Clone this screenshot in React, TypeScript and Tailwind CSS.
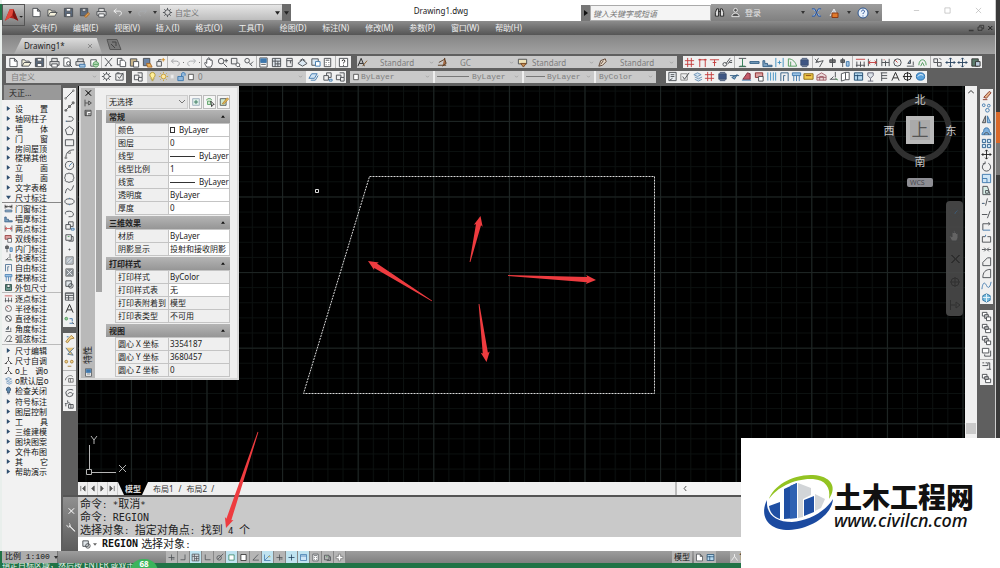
import type { ReactNode } from 'react';

type Shape = [d: string, stroke: string, fill?: string];

const K = '#4a4e52';
const B = '#3f78ad';
const R = '#c43c3c';
const G = '#4f9a5b';
const N = 'none';

// every glyph lives on a 12x12 board
const glyphs: Record<string, Shape[]> = {
  new: [['M2 1.5h5l3 3v6H2zM7 1.5v3h3', K, '#fff']],
  open: [['M1 10V3h3l1 1.5h4V6M1 10l2.5-4H11l-2.500 4z', K, '#f5f1dc']],
  save: [['M1.500 1.500h9v9h-9z', K, '#5b6b80'], ['M3.500 1.500h5v3h-5zM3.500 7h5v3.500h-5z', K, '#fff']],
  saveas: [['M1.500 1.500h8v8h-8z', K, '#5b6b80'], ['M3.500 2h4v2.500h-4z', K, '#fff'], ['M6 10l4-4 1.500 1.500-4 4z', '#a8682a', '#e0a050']],
  print: [['M3 5V1.500h6V5M1 5h10v4H1z', K, '#ddd'], ['M3 7.500h6V11H3z', K, '#fff']],
  preview: [['M2 1h5l2 2v7H2z', K, '#fff'], ['M9 7a2 2 0 1 1-4 0 2 2 0 0 1 4 0zM8.500 8.500L11 11', K]],
  plot: [['M3 5V2h6v3M1 5h9v4H1z', K, '#ddd'], ['M5 8h6v3H5z', B, '#a9c8e4']],
  publish: [['M3 3h6v7H3z', K, '#fff'], ['M8.500 5a3 3 0 1 0 .1 0zM6 8h5', G, '#b9dcb9']],
  cut: [['M2 1l7 8M10 1L3 9M2 9.500h2M8 9.500h2', K]],
  copy: [['M1.500 1.500h5v7h-5z', K, '#fff'], ['M4.500 3.500h4l2 2v5h-6z', K, '#fff']],
  paste: [['M1.500 2h7v8h-7z', K, '#c9b58a'], ['M5 5h5.500v6H5z', K, '#fff']],
  match: [['M1.500 1.500h7v8h-7z', K, '#6c84a4'], ['M5 7h4l2 4H6z', '#a8682a', '#e9b45c']],
  block: [['M2 5h5v5H2zM4 5V3h3', K], ['M9 1v4M7 3h4', '#d08a20']],
  undo: [['M4 2L1.500 4.500 4 7M2 4.500h5c4 0 4 5 1 5', '#9a9da0']],
  redo: [['M8 2l2.500 2.500L8 7M10 4.500H5c-4 0-4 5-1 5', '#a9acaf']],
  undoW: [['M5 2L2 4.500 5 7M2.500 4.500H8c3 0 3 4 0 5', '#f4f4f4']],
  pan: [['M3 11C1 8 0 6 1.500 6L3 7V3c0-1 1.500-1 1.500 0V1.500C4.500.5 6 .5 6 1.500V3c0-1 1.500-1 1.500 0v1C7.500 3 9 3 9 4v4l-1.500 3z', K, '#fff']],
  zoom: [['M7.500 4.500a3 3 0 1 1-6 0 3 3 0 0 1 6 0zM7 7l4 4M10 2v4M8 4h4', K]],
  zoomwin: [['M1.500 1.500h6v6h-6z', K], ['M8.500 6.500a2 2 0 1 0 .1 0zM10 10l1.500 1.500', K, '#fff']],
  zoomprev: [['M7 4a2.500 2.500 0 1 1-5 0 2.500 2.500 0 0 1 5 0zM6.500 6L10 10M11 5L8 8', K]],
  props: [['M2 1h8v10H2z', K, '#fff'], ['M3 2h6v4H3z', B, B], ['M3.500 8h5', K]],
  grid: [['M1.500 1.500h9v9h-9zM1.500 4.500h9M4.500 1.500v9M7.500 4.500v6M4.500 7.500h6', K, '#dde4ea']],
  palette: [['M3 1.500h6v9H3zM3 4h6M7 4v3', K, '#eee']],
  sheet: [['M1 7l5-4 5 4-5 3zM3 4l3-2 3 2', K, '#dce8f2']],
  markup: [['M2 2h7v7H2z', K, '#dce8f2'], ['M6 5h5v5H6z', B, '#fff']],
  calc: [['M2.500 1.500h7v9h-7zM4 3.500h4M4 6h1M7 6h1M4 8.500h1M7 8.500h1', K, '#fff']],
  help: [['M1.500 1.500h9v9h-9z', K, '#fff'], ['M4.500 4.500c0-2 3-2 3 0 0 1-1.500 1-1.500 2.500M6 8.500v1', '#111']],
  gear: [['M9 6a3 3 0 1 1-6 0 3 3 0 0 1 6 0z', K], ['M6 1v2M6 9v2M1 6h2M9 6h2M2.500 2.500L4 4M8 8l1.500 1.500M9.500 2.500L8 4M4 8L2.500 9.500', K]],
  wsave: [['M2 3h8v7H2zM4 6l2 2 4-6M3 2h3', K]],
  layers: [['M1.500 4.500h5v5h-5zM5 2h5v5', K], ['M6 7h4v4H6z', K, '#eee']],
  layersB: [['M1 8l3-5h6l-3 5z', B, '#cfe3f4'], ['M3 10h5l3-5', B]],
  bulb: [['M6 1.500a3 3 0 0 1 1.500 5.500v2h-3V7A3 3 0 0 1 6 1.500zM5 10.500h2', '#b59a34', '#ffef9a']],
  bulbB: [['M6 1.500a3 3 0 0 1 1.500 5.500v2h-3V7A3 3 0 0 1 6 1.500zM5 10.500h2', '#2b4560', '#5b87ad']],
  sun: [['M8.500 6a2.500 2.500 0 1 1-5 0 2.500 2.500 0 0 1 5 0zM6 1v1.500M6 9.500V11M1 6h1.500M9.500 6H11M2.500 2.500l1 1M8.500 8.500l1 1M9.500 2.500l-1 1M2.500 9.500l1-1', '#c8a03c', '#ffe9a0']],
  sheetY: [['M3 3h5v6H3z', '#d8d8d8', '#eee']],
  lock: [['M2 6h6v4.500H2zM6 6V3.500c0-2.500 4-2.500 4 0V5', B, '#8fb7dc']],
  box: [['M2.500 2h7v8h-7z', '#222', '#fff']],
  styleA: [['M1 10L4.500 1.500 8 10M2.500 7h4', '#222'], ['M6 10l5-6', '#8a5a28']],
  dim: [['M1 9h9M2 6l7-4M8 1l2 6-4 3', '#5a3b22', '#a46a44']],
  tbl: [['M1.500 2.500h9v5h-9z', K, '#efe2b8'], ['M4 7l3 4 3-4z', '#7a4a22', '#c58b50']],
  leader: [['M2 10l2-6 5-2 1 3-4 4zM4 8l3-4', '#5a4030', '#e8dccb']],
  hashR: [['M4 1v10M8 1v10M1 4h10M1 8h10', R]],
  pillR: [['M2 3h8M3 2v9M9 2v9M1.500 3h3M7.500 3h3', R]],
  pipeR: [['M1 3h10M6 3v7M4 6h4', R]],
  scis: [['M5 8a2 2 0 1 1-4 0 2 2 0 0 1 4 0zM4.500 7L9 1M6 8l3-4h2M8 6h3', K]],
  beam: [['M2 1.500h8M2 10.500h8', K], ['M6 2v8M3 10h6', '#2a7a50', '#2a7a50']],
  wall: [['M1 5h10v2H1z', '#2f5d82', '#7ba1c0']],
  stair: [['M1 9V4h2v3h3v2h5v1.500H1z', '#355f86', '#7ba1c0']],
  door: [['M2 1v10M10 1v10M4 6h4M6 4v4', '#3f8fc0']],
  arcG: [['M1.500 10V2c5 0 8 4 9 8zM4 10V5', G]],
  solid: [['M2 3h8v6H2z', '#3b4e70', '#3f5684'], ['M3 1.500h6M3 10.500h6', '#3b4e70']],
  brush: [['M1 2l4 4M5 1L2 6l8-2-4 7', K]],
  pin: [['M6 1v10M3 3h6v3H3z', K, '#777']],
  pinB: [['M4 1v10M2 3h4v3H2z', K, '#777'], ['M8 5h3v5H8z', B, '#a9c8e4']],
  dimR: [['M2 5v6M6 5v6M10 5v6M1 9h10', K], ['M1 2.500h10', R]],
  dimRR: [['M1.500 2v8M10.500 2v8', K], ['M1.500 6h9M3.500 4L2 6l1.500 2M8.500 4L10 6 8.500 8', R]],
  dimBK: [['M1.500 8h9v2.500h-9z', '#4b6a88', '#8fb0cc'], ['M1.500 1v5M10.500 1v5M1.500 3.500h9M4 2L2.500 3.500 4 5M8 2l1.500 1.500L8 5', '#222']],
  dimK: [['M2 2v8M10 2v8M6 4v6M2 6h8', K], ['M4 3h1', R]],
  circ: [['M10 6a4 4 0 1 1-8 0 4 4 0 0 1 8 0z', K], ['M3.500 3.500L6 6', R]],
  diam: [['M10 6a4 4 0 1 1-8 0 4 4 0 0 1 8 0zM3 3l6 6', K], ['M3 5V3h2M9 7v2H7', K]],
  tri: [['M2 10h8M3 7l3-4v4zM9 5v4', K, '#7ea0c0']],
  arcs: [['M2 9c0-8 8-8 8 0M4 10l2-4 2 4', G]],
  chord: [['M1 10L5 3M5 3c3-2 5 0 5 2M3 10h8M7 10l3-6', K]],
  chain: [['M2 2h4v4H2zM6 6h4v4H6zM8 1l2 2', K]],
  move: [['M6 1v10M1 6h10M4.500 2.500L6 1l1.500 1.500M4.500 9.500L6 11l1.500-1.500M2.500 4.500L1 6l1.500 1.500M9.500 4.500L11 6 9.500 7.500', '#27435f']],
  clip: [['M2 2h7v8H2z', '#333', '#5a7a6a'], ['M6 5h5v5H6z', '#333', '#bcd']],
  list: [['M2 1.500h8v9H2zM4 4h4M4 6h4M3 10l3-2', K, '#e5eaee']],
  check: [['M2 3h7v7H2z', '#888', '#eee'], ['M4 6l2 3 5-7', K]],
  cyl: [['M2 4l4-2 4 2-4 2zM3 6.500l4 2 4-2M3 9l4 2 4-2', '#6f93b5', '#cfe0ef']],
  flag: [['M1 5h10M3 7l3 2 3-5z', '#355f86', '#7ba1c0']],
  redB: [['M2 9l5-7 3 1v6z', '#7c2c3c', '#c45a6a'], ['M1 10h10', B]],
  redS: [['M1.500 2h8v5h-8z', '#8c2c2c', '#dba0a0'], ['M5 6h5v5H5z', K, '#fff']],
  cols: [['M2 1.500v9M5 1.500v9M8 1.500v9M10.500 1.500v9', '#3f8fc0']],
  gate: [['M2 11V2h8v9M5 11V5h2', '#355f86']],
  gateB: [['M1.500 2h9v3h-9z', B, '#9cc4e6'], ['M3 5v6M6 5v6M9 5v6', B]],
  yel: [['M1 3h10v6H1z', '#8a6a10', '#f0c84c'], ['M3 5h6', '#8a4a10']],
  house: [['M1 10V5l5-3 5 3v5zM4 10V6h4v4M1 7h10', '#a0606a', '#ead8d8']],
  run: [['M2 9h8M3 9l3-3M8 1v6', K], ['M8 8l3 2', G]],
  node: [['M6 2v4M2 10l4-4 4 4M1 10h3M8 10h3M5 2h2', '#333']],
  book: [['M1.500 3L6 1.500v8L1.500 11zM6 1.500h4v8H6', K, '#fff']],
  win: [['M1.500 2h9v8h-9zM5 4v6M1.500 5h9', '#234d70', '#b5d8ee']],
  tub: [['M2 2h8v8H2zM4 2v4h4V2', '#1d3d38', '#6f9c92']],
  cup: [['M3 2h6v3l-3 3-3-3zM6 8v3M3 11h6', '#667', '#dde4ea']],
  flow: [['M3 2h7M4 5h6M4 8h6M4 2v9', K]],
  bigA: [['M2 10.500L6 1.500l4 9M3.500 7.500h5', '#222']],
  target: [['M10 6a4 4 0 1 1-8 0 4 4 0 0 1 8 0zM6 1v10M1 6h10', '#222']],
  globe: [['M10.500 6a4.500 4 0 1 1-9 0 4.500 4 0 0 1 9 0z', '#2b6ca8', '#5ba3dc'], ['M3 6c2-3 5-2 6-1', '#fff']],
  line: [['M2 10l8-8', K], ['M1 9.500h1.500V11H1zM9.500 1H11v1.500H9.500z', '#888']],
  xline: [['M2 10l8-8', K], ['M1 9.500h2V11H1zM9 1h2v2H9zM5 5h2v2H5z', '#666', '#888']],
  pline: [['M2 9h5c4 0 4-5 0-5H5', K], ['M2 9h1', B]],
  poly: [['M6 1.500l4.500 3.500-1.700 5.500H3.200L1.500 5z', K]],
  rect: [['M1.500 3h9v6.500h-9z', K]],
  arc: [['M2 11C2 5 5 2 11 2', K], ['M1 10h2v1.500H1zM5 4h2v2H5z', '#888']],
  circle: [['M10.500 6a4.500 4.500 0 1 1-9 0 4.500 4.500 0 0 1 9 0z', K], ['M6 6l2.500-2.500M5.500 6.500h1', B]],
  cloud: [['M3.500 2c1-1 3-1 4 0 2-.5 3 1 2.500 2.500 1 1 1 2.500 0 3.500.5 2-1 3-2.500 2.500-1 1-3 1-4 0C2 11 .8 9.500 1.500 8c-1-1-1-2.500 0-3.500C1 3 2 1.500 3.500 2z', K]],
  spline: [['M1.500 10c1-5 2-6 4-4s3 1 5-4.500', K]],
  ellipse: [['M11 6a5 3 0 1 1-10 0 5 3 0 0 1 10 0z', K], ['M5.500 2.500h1M5.500 9.500h1', B]],
  earc: [['M5 9.500h2c5 0 4-6-1-6S1 5.500 2 7', K]],
  insert: [['M2 5h5v5H2zM5 5V2h5v5H7', K], ['M8 9h3v2H8z', B]],
  mkblock: [['M2 3h6v6H2zM8 5h2v5H5', K], ['M4 5h2', G]],
  point: [['M5.500 5.500h1v1h-1z', K]],
  hatch: [['M2 2h8v8H2z', '#777', '#cfd4d8'], ['M2 6l4-4M2 10l8-8M6 10l4-4', '#9aa6b2']],
  grad: [['M2 2h8v8H2z', '#777', '#8b9299'], ['M3 3l6 6M9 3L3 9', '#eee']],
  region: [['M2 2h6v6H2z', K, '#e0e6ea'], ['M10 7.500a2.500 2.500 0 1 1-5 0 2.500 2.500 0 0 1 5 0z', K]],
  table: [['M1.500 2h9v8h-9zM1.500 5h9M1.500 7.500h9M5 5v5', K, '#fff'], ['M2 3h8', K]],
  dots: [['M4 4a1.500 1.500 0 1 1-3 0 1.500 1.500 0 0 1 3 0z', G, '#9c9'], ['M6 4h3v3M6 9h4', B], ['M9 8l2 2', K]],
  key: [['M8 1.500l3 3-4 1-3 4-2-1 3-4z', '#a9803a', '#f3d690'], ['M3 3h2', B]],
  keyB: [['M2 2l4 5 5-5M4 9l3-3 3 4z', '#5a7896', '#e8c478']],
  keyC: [['M4 4a1.500 1.500 0 1 1-3 0 1.500 1.500 0 0 1 3 0zM10 4a1.500 1.500 0 1 1-3 0 1.500 1.500 0 0 1 3 0zM4 9h4', '#a9803a', '#f3d690']],
  cloudq: [['M1.500 8c0-4 6-7 8-4M5 6h5v4H5zM7 6v4', '#777']],
  wheel: [['M10 6.500a4 4 0 1 1-8 0c0-3 5-5 8-3M4 8c2-3 4-2 5-1', K]],
  sunb: [['M2 8a3 3 0 0 1 5-3M4 1.500v2M1 5h1.500M5 6h5v4H5zM7.500 6v4', K]],
  eraser: [['M2 10.500h5M3 8l6-6.500 2 1.500-5 6z', '#8a3b2c', '#e5b58a']],
  copy2: [['M4.500 3.500a1.500 1.500 0 1 1-3 0 1.500 1.500 0 0 1 3 0zM10 4a1.500 1.500 0 1 1-3 0 1.500 1.500 0 0 1 3 0zM9 9a2 2 0 1 1-4 0 2 2 0 0 1 4 0z', B]],
  mirror: [['M5 2L1.500 9.500H5z', K, '#bbb'], ['M7 2l3.500 7.500H7z', B, '#9cc4e6']],
  offset: [['M1 9.500c0-3 2-3 2-4s0-3.500 3-3.500 3 2.500 3 3.500 2 1 2 4z', B, '#7fb0dc'], ['M3.500 9.500c0-3 5-3 5 0', K]],
  array: [['M1.500 1.500h3.500v3.500H1.500zM7 1.500h3.500v3.500H7zM1.500 7h3.500v3.500H1.500zM7 7h3.500v3.500H7z', '#2c5f8e', '#cfe6f6']],
  arrow4: [['M6 1v10M1 6h10M4.500 2.500L6 1l1.500 1.500M4.500 9.500L6 11l1.500-1.500M2.500 4.500L1 6l1.500 1.500M9.500 4.500L11 6 9.500 7.500', '#222']],
  rotate: [['M4 2.500a4.500 4.500 0 1 0 4 0M4.500 .5v2.500H2', K]],
  scale: [['M1.500 1.500h9v9h-9z', B, '#cfe6f6'], ['M1.500 6h5v4.500', B]],
  stretch: [['M2 1.500h5l3 9H2z', K, '#d8efe8'], ['M5 6h3v3H5z', K]],
  trim: [['M1 7h3M8 5h3M5 9.500l2-8', K], ['M2 7h1', B]],
  extend: [['M1 6h6M7 10l3-8', K]],
  brk: [['M2 10V3h7M8 1.500L10 3 8 4.500', K], ['M2 10h8', B]],
  brk2: [['M1.500 10V4h3M7 4h3.500v6h-9', K], ['M5 2v2', B]],
  join: [['M1 6h4M7 6h4M3.500 4l2 2-2 2M8.500 4l-2 2 2 2', K]],
  chamfer: [['M2 10.500V7l5-5h3.500v8.500z', K, '#eee']],
  fillet: [['M2 10.500c0-6 3-9 8.500-9v9z', K, '#eee']],
  blend: [['M1 10c1-8 3-8 5-4s4 2 5-4', B]],
  explode: [['M2 4l4-2 4 2v5l-4 2-4-2z', '#2c6f9e', '#7cbfe0'], ['M6 2v9M2 6h8', '#e8f4fb']],
  order: [['M1.500 1.500h5v4h-5z', K, '#fff'], ['M4 4h4v4H4z', K, '#ccc'], ['M6 6.500h4.500v4H6z', K, '#fff']],
  order2: [['M1.500 1.500h5v4h-5zM5 6.500h5.500v4H5z', K, '#fff'], ['M4 4h4v3H4z', K, '#bbb']],
  order3: [['M1.500 1.500h7v5h-7z', K, '#fff'], ['M10.500 4v6H4V8', K]],
  order4: [['M1.500 2h2M5 2h2M1.500 5h6V2h2v7M6 9h5', K]],
  bino: [['M1.500 10V6L3 2h2v8zM7 10V2h2l1.500 4v4zM5 5h2', '#222', '#ddd']],
  user: [['M8 3.500a2 2 0 1 1-4 0 2 2 0 0 1 4 0zM2 10.500c0-5 8-5 8 0z', '#eee', '#555']],
  exch: [['M1 2h3l4 8h3M11 2H8L4 10H1', '#244f9a', '#8fb7e8']],
  lockO: [['M2 9l4-7 2 4', '#e8e8e8', '#b8c6d8'], ['M4 6h6v4.500H4z', '#8c3a12', '#e07a2c']],
  qmark: [['M11 6A5 5 0 1 1 1 6a5 5 0 0 1 10 0z', '#2c5590', '#e9f1fa'], ['M4.500 4.500c0-2 3-2 3 0 0 1-1.500 1-1.500 2.500M6 8.500v1', '#244f9a']],
  cross: [['M2 2l8 8M10 2l-8 8', '#555']],
  crossK: [['M2 2l8 8M10 2l-8 8M3 2l8 8M11 2l-8 8', '#111']],
  crossW: [['M2 2l8 8M10 2l-8 8M3 2l8 8M11 2l-8 8', '#f2f2f2']],
  crossL: [['M1.500 1.500l9 9M10.500 1.500l-9 9', '#aaa']],
  wrench: [['M4 4l7 7M3.500 4.500l7 7M1 3.500c0 4 5 3 4 0L4 1.500', '#f2f2f2']],
  minus: [['M1.500 6h9', '#aaa']],
  minusK: [['M1.500 9h8M1.500 10h8', '#222']],
  maxi: [['M1.500 1.500h9v9h-9z', '#aaa']],
  restore: [['M1.500 4.500h6v5h-6zM4 4V2h6v5H8', '#222']],
  hide: [['M1.500 1v10M2 6h4M7 3l4 3-4 3M7 3v6', '#222']],
  menu: [['M1.500 2h9v8h-9z', '#222', '#fff'], ['M2 3.500h8M4 4v6M2.500 4v6M6 7h4M6 9h4', '#222']],
  plusC: [['M2 2h8v8H2z', '#9ab', '#dff0ea'], ['M6 3.500v5M3.500 6h5', '#2a6f50']],
  select: [['M2 4c0-3 6-3 6 0M3 5h4v4H3z', G, '#cfe8cf'], ['M7 5l4 4-2 .5-1 2z', '#222', '#fff']],
  pencil: [['M1.500 2h7v8h-7z', K, '#cfe8cf'], ['M4 8l6-7 1.500 1.500-6 6z', '#b07a20', '#f2c860']],
  snap: [['M6 2v8M2 6h8M7 8h3', K]],
  ortho: [['M8 2v7H2', K]],
  orthoL: [['M3 2v7h7', K]],
  polar: [['M8.500 6.500a3 3 0 1 1-6 0 3 3 0 0 1 6 0zM4 8l7-7', K]],
  square: [['M2.500 2.500h7v7h-7z', '#2f7f5f', '#fff']],
  angle: [['M9.500 2L2.500 9.500h8', K]],
  ucs: [['M2 2v8h8M2 10l7-7', B], ['M7 5h3', '#c9a030']],
  plusK: [['M6 2v8M2 6h8', '#1b3a56']],
  plusW: [['M4.500 1.500h3v3h3v3h-3v3h-3v-3h-3v-3h3z', '#777', '#fff']],
  sheetB: [['M2 2h8v8H2z', B, '#cfe6f6'], ['M2 4h8', B]],
  person: [['M6 1.500v3M6 4.500L2 10M6 4.500l4 5.500', '#fff']],
};

function Glyph({ name, className = 'w-[11px] h-[11px]' }: { name: string; className?: string }) {
  return (
    <svg viewBox="0 0 12 12" className={`shrink-0 ${className}`} aria-hidden="true">
      {glyphs[name].map(([d, stroke, fill], i) => (
        <path key={i} d={d} stroke={stroke} fill={fill ?? N} strokeWidth="1" />
      ))}
    </svg>
  );
}

// '|' in a list is a separator, '.' a tiny drop-down arrow
function Tools({ names, vertical = false }: { names: string; vertical?: boolean }) {
  return (
    <>
      {names.split(' ').map((name, i) => {
        if (name === '|') return <span key={i} className={vertical ? 'w-full h-px bg-[#b5b5b5]' : 'w-px h-full bg-[#b5b5b5]'} />;
        if (name === '.') return <span key={i} className="w-px h-px bg-[#777]" />;
        return (
          <button key={i} type="button" aria-label={name} className="flex shrink-0 items-center justify-center">
            <Glyph name={name} />
          </button>
        );
      })}
    </>
  );
}

function Pick({ label, value, className, children }: { label: string; value: string; className: string; children?: ReactNode }) {
  return (
    <label className={`relative flex items-center bg-[#c9c9c9] text-[#7d7d7d] text-[8px] ${className}`}>
      {children}
      <select aria-label={label} className="min-w-0 flex-1 h-full appearance-none bg-transparent leading-[11px] outline-none">
        <option>{value}</option>
      </select>
      <svg viewBox="0 0 6 4" className="w-[5px] h-[3px] mr-[3px] shrink-0" aria-hidden="true">
        <path d="M1 1l2 2 2-2" stroke="#999" fill="none" />
      </svg>
    </label>
  );
}

function Down({ color = '#222' }: { color?: string }) {
  return (
    <svg viewBox="0 0 6 4" className="w-[5px] h-[4px] shrink-0" aria-hidden="true">
      <path d="M0 0h6L3 4z" fill={color} />
    </svg>
  );
}

function Dot() {
  return (
    <svg viewBox="0 0 4 3" className="h-[3px] w-[4px] shrink-0" aria-hidden="true">
      <path d="M0 0h4L2 3z" fill="#333" />
    </svg>
  );
}

function TitleBar() {
  return (
    <header className="flex h-[21px] items-end bg-white">
      <div className="flex h-[17px] w-[289px] items-center bg-linear-to-b from-[#b8b8b8] to-[#8d8d8d] pl-[29px]">
        <div className="flex w-[126px] items-center justify-between">
          {['new', 'open', 'save', 'saveas', 'print', 'undoW'].map(n => (
            <button key={n} type="button" aria-label={n}><Glyph name={n} /></button>
          ))}
          <Dot />
          <button type="button" aria-label="redo"><Glyph name="redo" /></button>
          <Dot />
        </div>
        <label className="ml-[3px] flex h-[15px] w-[122px] items-center gap-[2px] bg-linear-to-b from-[#e6e6e6] to-[#bdbdbd] px-[2px] text-[#777]">
          <Glyph name="gear" />
          <select aria-label="工作空间" className="flex-1 appearance-none bg-transparent text-[8px] leading-[12px]">
            <option>自定义</option>
          </select>
          <Down />
        </label>
        <button type="button" aria-label="更多" className="flex h-full w-[9px] items-center justify-center bg-[#6c6c6c]"><Down /></button>
      </div>
      <h1 className="flex-1 pl-[10px] text-center text-[8px] leading-[20px] text-[#222]">Drawing1.dwg</h1>
      <button type="button" aria-label="展开" className="flex h-[16px] w-[9px] items-center justify-center bg-[#777]">
        <svg viewBox="0 0 4 6" className="h-[6px] w-[4px]"><path d="M0 0l4 3-4 3z" fill="#111" /></svg>
      </button>
      <input
        aria-label="搜索"
        placeholder="键入关键字或短语"
        className="h-[16px] w-[121px] border border-[#aaa] bg-[#f4f4f4] px-[2px] text-[8px] italic leading-[14px] placeholder:text-[#777]"
      />
      <div className="flex h-[17px] w-[171px] items-center bg-linear-to-b from-[#9d9d9d] to-[#808080] px-[3px]">
        <Glyph name="bino" />
        <Glyph name="user" className="ml-[5px] h-[11px] w-[11px]" />
        <button type="button" className="ml-[4px] text-[8px] leading-[12px] text-[#e6e6e6]">登录</button>
        <div className="ml-auto flex w-[78px] items-center justify-between">
          <Dot />
          <Glyph name="exch" />
          <Glyph name="lockO" className="h-[12px] w-[12px]" />
          <Dot />
          <Glyph name="qmark" className="h-[12px] w-[12px]" />
          <Dot />
        </div>
      </div>
      <div className="flex h-[21px] w-[113px] items-center justify-end gap-[24px] pr-[13px]">
        <button type="button" aria-label="最小化"><Glyph name="minus" className="h-[7px] w-[7px]" /></button>
        <button type="button" aria-label="最大化"><Glyph name="maxi" className="h-[7px] w-[7px]" /></button>
        <button type="button" aria-label="关闭"><Glyph name="crossL" className="h-[7px] w-[7px]" /></button>
      </div>
    </header>
  );
}

const menus = ['文件(F)', '编辑(E)', '视图(V)', '插入(I)', '格式(O)', '工具(T)', '绘图(D)', '标注(N)', '修改(M)', '参数(P)', '窗口(W)', '帮助(H)'];

function MenuBar() {
  return (
    <nav className="flex h-[14px] items-center bg-linear-to-b from-[#8c8c8c] to-[#555] pl-[30px]">
      <ul className="flex gap-[16px] text-[8px] leading-[14px] text-[#efefef]">
        {menus.map(m => (
          <li key={m}><button type="button">{m}</button></li>
        ))}
      </ul>
      <div className="ml-auto flex items-center gap-[2px] pr-[2px]">
        <Glyph name="minusK" className="h-[7px] w-[7px]" />
        <Glyph name="restore" className="h-[8px] w-[8px]" />
        <Glyph name="crossK" className="h-[6px] w-[6px]" />
      </div>
    </nav>
  );
}

function Toolbars() {
  return (
    <div className="bg-[#606060]">
      <div className="flex h-[19px] items-end bg-linear-to-b from-[#858585] to-[#a2a2a2] pl-[12px]">
        <button type="button" className="flex h-[16px] w-[88px] items-center justify-between bg-linear-to-b from-[#dcdcdc] to-[#a9a9a9] pr-[9px] pl-[10px] text-[8px] text-[#222] [clip-path:polygon(9%_0,94%_0,100%_100%,0_100%)]">
          Drawing1*
          <Glyph name="cross" className="h-[6px] w-[6px]" />
        </button>
        <button type="button" aria-label="新图形" className="mb-[4px] ml-[4px]">
          <svg viewBox="0 0 16 11" className="h-[11px] w-[16px]">
            <path d="M1 .5h10l4 10H4z" fill="#777" stroke="#555" />
            <path d="M6 3h4v4M5 5l4 4" stroke="#444" fill="none" />
          </svg>
        </button>
      </div>

      <div className="flex h-[16px] items-center pl-[4px]">
        <div className="flex h-[12px] w-[345px] items-center justify-between bg-[#f0f0f0] px-[2px]">
          <Tools names="new open save | print preview plot publish | cut copy paste match block | undo . redo . | pan zoom zoomwin zoomprev | props grid palette sheet markup calc | help" />
        </div>
        <div className="ml-[6px] flex h-[12px] w-[320px] bg-[#f0f0f0]">
          <Pick label="文字样式" value="Standard" className="flex-1 gap-[12px]"><Glyph name="styleA" /></Pick>
          <Pick label="标注样式" value="GC" className="flex-1 gap-[12px]"><Glyph name="dim" /></Pick>
          <Pick label="表格样式" value="Standard" className="flex-1 gap-[4px]"><Glyph name="tbl" /></Pick>
          <Pick label="引线样式" value="Standard" className="flex-1 gap-[12px]"><Glyph name="leader" /></Pick>
        </div>
        <div className="ml-[6px] flex h-[12px] w-[299px] items-center justify-between bg-[#f0f0f0] px-[1px]">
          <Tools names="hashR pillR pipeR scis | beam wall stair door arcG solid | brush pin pinB | dimR dimRR dimK circ tri arcs | chain move move clip" />
        </div>
      </div>

      <div className="flex h-[15px] items-center pb-[2px] pl-[4px]">
        <Pick label="工作空间" value="自定义" className="h-[12px] w-[94px] pl-[5px]" />
        <div className="flex h-[12px] w-[26px] items-center justify-around bg-[#f0f0f0]"><Tools names="gear wsave" /></div>
        <div className="ml-[6px] flex h-[12px] w-[214px] items-center bg-[#f0f0f0] pl-[1px]">
          <Tools names="layers" />
          <Pick label="图层" value="0" className="ml-[3px] h-full flex-1">
            <Glyph name="bulb" />
            <Glyph name="sun" />
            <Glyph name="sheetY" className="h-[9px] w-[7px]" />
            <Glyph name="lock" />
            <Glyph name="box" className="mr-[3px] h-[8px] w-[8px]" />
          </Pick>
          <div className="flex w-[40px] justify-between pl-[2px]"><Tools names="layersB insert layers" /></div>
        </div>
        <div className="ml-[4px] flex h-[12px] w-[306px] gap-[2px] bg-[#eee]">
          <Pick label="颜色" value="ByLayer" className="w-[83px] pl-[2px] font-['Liberation_Mono']">
            <Glyph name="box" className="mr-[1px] h-[8px] w-[8px]" />
          </Pick>
          <Pick label="线型" value="ByLayer" className="w-[87px] pl-[2px] font-['Liberation_Mono']">
            <span className="mr-[3px] h-px w-[32px] bg-[#777]" />
          </Pick>
          <Pick label="线宽" value="ByLayer" className="w-[70px] pl-[2px] font-['Liberation_Mono']">
            <span className="mr-[2px] h-px w-[19px] bg-[#777]" />
          </Pick>
          <Pick label="打印样式" value="ByColor" className="flex-1 pl-[3px] font-['Liberation_Mono']" />
        </div>
        <div className="ml-[10px] flex h-[12px] w-[261px] items-center justify-between bg-[#f0f0f0] px-[1px]">
          <Tools names="list check cyl hashR solid flag redB redS cols gate gateB yel house run book win cup flow bigA target globe" />
        </div>
      </div>
    </div>
  );
}

const treeTop = ['设 置', '轴网柱子', '墙 体', '门 窗', '房间屋顶', '楼梯其他', '立 面', '剖 面', '文字表格', '尺寸标注'];
const treeDims = [
  ['dimBK', '门窗标注'], ['stair', '墙厚标注'], ['dimRR', '两点标注'], ['redS', '双线标注'], ['pinB', '内门标注'],
  ['run', '快速标注'], ['gate', '自由标注'], ['gateB', '楼梯标注'], ['tub', '外包尺寸'],
];
const treePoints = [['dimR', '逐点标注'], ['circ', '半径标注'], ['diam', '直径标注'], ['tri', '角度标注'], ['chord', '弧弦标注']];
const treeEdit = [['', '尺寸编辑'], ['node', '尺寸自调'], ['node', 'o上 调o'], ['cyl', 'o默认层o'], ['bulbB', '检查关闭']];
const treeBottom = ['符号标注', '图层控制', '工 具', '三维建模', '图块图案', '文件布图', '其 它', '帮助演示'];

function TreeRow({ label, icon, open = false }: { label: string; icon?: string; open?: boolean }) {
  return (
    <li className="flex min-h-0 flex-1 items-center">
      <span className="flex w-[13px] items-center justify-center">
        {icon ? (
          <Glyph name={icon} className="h-[9px] w-[9px]" />
        ) : (
          <svg viewBox="0 0 6 6" className="h-[5px] w-[5px]">
            <path d={open ? 'M0 1h6L3 5z' : 'M1 0l4 3-4 3z'} fill="#2f4f6f" />
          </svg>
        )}
      </span>
      <button type="button" className="flex w-[33px] justify-between whitespace-nowrap text-[8px] leading-[9px] text-[#111]">
        {label.split(' ').map(part => <span key={part}>{part}</span>)}
      </button>
    </li>
  );
}

function TreePanel() {
  return (
    <aside className="w-[59px] shrink-0 bg-[#f2f2f2]">
      <h2 className="mb-[4px] h-[15px] border-l-2 border-[#666] bg-[#999] pl-[5px] text-[8px] leading-[15px] text-[#222]">天正...</h2>
      <ul className="flex h-[98px] flex-col">
        {treeTop.map(t => <TreeRow key={t} label={t} open={t === '尺寸标注'} />)}
      </ul>
      <ul className="flex h-[90px] flex-col border-t border-[#888] pt-[1px]">
        {treeDims.map(([icon, t]) => <TreeRow key={t} icon={icon} label={t} />)}
      </ul>
      <ul className="flex h-[51px] flex-col border-t border-[#bbb] pt-[1px]">
        {treePoints.map(([icon, t]) => <TreeRow key={t} icon={icon} label={t} />)}
      </ul>
      <ul className="mt-[1px] flex h-[51px] flex-col border-t border-[#bbb] pt-[1px]">
        {treeEdit.map(([icon, t]) => <TreeRow key={t} icon={icon} label={t} />)}
      </ul>
      <ul className="mt-[2px] flex h-[79px] flex-col">
        {treeBottom.map(t => <TreeRow key={t} label={t} />)}
      </ul>
    </aside>
  );
}

const rule = <span className="mr-[4px] inline-block h-px w-[25px] bg-[#333] align-middle" />;

const sections: { title: string; rows: [string, ReactNode, boolean?][] }[] = [
  {
    title: '常规',
    rows: [
      ['颜色', <><span className="mr-[4px] inline-block h-[6px] w-[5px] border border-[#333]" />ByLayer</>],
      ['图层', '0'],
      ['线型', <>{rule}ByLayer</>],
      ['线型比例', '1'],
      ['线宽', <>{rule}ByLayer</>],
      ['透明度', 'ByLayer'],
      ['厚度', '0'],
    ],
  },
  { title: '三维效果', rows: [['材质', 'ByLayer'], ['阴影显示', '投射和接收阴影']] },
  { title: '打印样式', rows: [['打印样式', 'ByColor', true], ['打印样式表', '无'], ['打印表附着到', '模型', true], ['打印表类型', '不可用', true]] },
  { title: '视图', rows: [['圆心 X 坐标', '3354187', true], ['圆心 Y 坐标', '3680457', true], ['圆心 Z 坐标', '0', true]] },
];

function Properties() {
  return (
    <section className="absolute top-0 left-[1px] flex h-[294px] w-[160px] border-2 border-[#d9d9d9] bg-[#efefef] text-[8px] text-[#222]">
      <div className="flex w-[14px] flex-col items-center gap-[2px] bg-[#b9b9b9] py-[1px]">
        <button type="button" aria-label="关闭"><Glyph name="crossK" className="h-[8px] w-[8px]" /></button>
        <button type="button" aria-label="自动隐藏"><Glyph name="hide" className="h-[8px] w-[8px]" /></button>
        <button type="button" aria-label="特性菜单"><Glyph name="menu" className="h-[8px] w-[8px]" /></button>
        <h2 className="mt-auto mb-[2px] rotate-180 text-[9px] leading-[12px] [text-orientation:sideways] [writing-mode:vertical-rl]">特性</h2>
        <Glyph name="props" className="h-[9px] w-[9px]" />
      </div>
      <div className="w-[8px] pt-[22px] pl-[1px]">
        <div className="h-[182px] w-[6px] bg-[#a5a5a5]" />
      </div>
      <div className="min-w-0 flex-1 overflow-hidden pt-[7px] pr-[7px] pl-[3px]">
        <div className="mb-[1px] flex gap-[1px]">
          <label className="flex h-[14px] flex-1 items-center border border-[#ccc] bg-[#e6e6e6] px-[2px]">
            <select aria-label="选择" className="min-w-0 flex-1 appearance-none bg-transparent leading-[12px]">
              <option>无选择</option>
            </select>
            <svg viewBox="0 0 6 4" className="h-[4px] w-[6px]"><path d="M0 0l3 3 3-3" stroke="#777" fill="none" /></svg>
          </label>
          {['plusC', 'select', 'pencil'].map(n => (
            <button key={n} type="button" aria-label={n} className="flex h-[14px] w-[13px] items-center justify-center border border-[#bbb] bg-[#f6f6f6]">
              <Glyph name={n} className="h-[10px] w-[10px]" />
            </button>
          ))}
        </div>
        {sections.map(({ title, rows }) => (
          <div key={title} className="mb-[1px]">
            <h3 className="flex h-[13px] items-center justify-between bg-linear-to-b from-[#b5b5b5] to-[#969696] px-[3px] font-bold leading-[13px]">
              {title}
              <svg viewBox="0 0 6 4" className="mr-[2px] h-[3px] w-[4px]"><path d="M0 4h6L3 0z" fill="#111" /></svg>
            </h3>
            <table className="ml-[9px] w-[115px] table-fixed border-collapse">
              <tbody>
                {rows.map(([label, value, locked]) => (
                  <tr key={label} className="h-[13px]">
                    <th scope="row" className="h-[13px] w-[53px] overflow-hidden border border-[#c4c4c4] p-0 pl-[2px] text-left font-normal leading-[12px] whitespace-nowrap">{label}</th>
                    <td className={`h-[13px] overflow-hidden border border-[#c4c4c4] p-0 pl-[1px] leading-[12px] whitespace-nowrap ${locked ? 'bg-[#efefef]' : 'bg-white'}`}>{value}</td>
                  </tr>
                ))}
              </tbody>
            </table>
          </div>
        ))}
      </div>
    </section>
  );
}

// tail (x1,y1) to tip (x2,y2), in drawing coordinates
const arrows: [number, number, number, number][] = [
  [392, 176, 402.5, 130],
  [354, 215, 290, 175],
  [430, 189.500, 518, 194],
  [401, 218, 408.500, 276],
  [180, 346, 148, 442],
];

function Arrow({ x1, y1, x2, y2 }: { x1: number; y1: number; x2: number; y2: number }) {
  const len = Math.hypot(x2 - x1, y2 - y1);
  const angle = (Math.atan2(y2 - y1, x2 - x1) * 180) / Math.PI;
  return (
    <path
      d={`M0 -.4L${len - 9} -2.600L${len - 10} -4.500L${len} 0L${len - 10} 4.500L${len - 9} 2.600L0 .4Z`}
      fill="#ee3b3f"
      transform={`translate(${x1} ${y1}) rotate(${angle})`}
    />
  );
}

function Canvas() {
  return (
    <main className="relative min-h-0 min-w-0 flex-1 bg-black">
      <svg className="h-full w-full" aria-label="drawing">
        <defs>
          <pattern id="minor" width="15.120" height="15.120" x="7.500" y="4.600" patternUnits="userSpaceOnUse">
            <path d="M0 .5h15.120M.5 0v15.120" stroke="#0c1110" fill="none" />
          </pattern>
          <pattern id="major" width="75.600" height="75.600" x="52.900" y="34.900" patternUnits="userSpaceOnUse">
            <path d="M0 .5h75.600M.5 0v75.600" stroke="#1f2625" fill="none" />
          </pattern>
        </defs>
        <rect width="100%" height="100%" fill="url(#minor)" />
        <rect width="100%" height="100%" fill="url(#major)" />
        <path d="M291.500 90.500H576.500V307.500H225.500Z" fill="none" stroke="#d8d8d8" strokeDasharray="2 1" />
        <path d="M237.500 103.500h3v3h-3z" fill="none" stroke="#ddd" />
        <g stroke="#b5b5b5" fill="none">
          <path d="M8.500 383.500h5v5h-5zM11.500 383V359M13.500 386.500H38" />
          <path d="M13 350l3 4 3-4M16 354v4M41 379l7 7M48 379l-7 7" />
        </g>
      </svg>
      <svg className="pointer-events-none absolute inset-0 z-20 h-full w-full overflow-visible" aria-hidden="true">
        {arrows.map(([x1, y1, x2, y2]) => <Arrow key={x1} x1={x1} y1={y1} x2={x2} y2={y2} />)}
      </svg>

      <Properties />

      {/* view cube */}
      <svg viewBox="0 0 76 100" className="absolute top-[6px] right-[7px] h-[100px] w-[76px]">
        <circle cx="38" cy="38" r="29" fill="none" stroke="#303030" strokeWidth="6" />
        <rect x="24" y="24" width="28" height="28" fill="#b9b9b9" />
        <rect x="28" y="28" width="20" height="20" fill="#aaa" />
        <g fill="#c9c9c9" fontSize="11" textAnchor="middle">
          <text x="38" y="12">北</text>
          <text x="38" y="74">南</text>
          <text x="7" y="43">西</text>
          <text x="69" y="43">东</text>
          <text x="38" y="44" fontSize="17" fill="#555">上</text>
        </g>
        <rect x="25" y="86" width="26" height="9" rx="2" fill="#8e8e94" />
        <text x="28" y="93" fontSize="7" fill="#4a4a50">WCS</text>
      </svg>
      {/* navigation bar */}
      <div className="absolute top-[115px] right-[2px] flex h-[115px] w-[17px] flex-col items-center justify-around rounded-sm bg-[#4b4b4b] opacity-90">
        <Glyph name="circle" className="h-[12px] w-[12px] opacity-50" />
        <Glyph name="pan" className="h-[12px] w-[12px] opacity-20" />
        <Glyph name="crossK" className="h-[12px] w-[12px] opacity-40" />
        <Glyph name="target" className="h-[12px] w-[12px] opacity-50" />
        <Glyph name="hide" className="h-[12px] w-[12px] opacity-50" />
      </div>
    </main>
  );
}

function LayoutTabs() {
  return (
    <div className="flex h-[13px] items-center bg-[#efefef] text-[8px] leading-[12px] text-[#333]">
      <div className="flex h-full items-center">
        {['M2 1v6M7 1L4 4l3 3z', 'M6 1L3 4l3 3z', 'M2 1l3 3-3 3z', 'M6 1v6M1 1l3 3-3 3z'].map(d => (
          <button key={d} type="button" aria-label="翻页" className="flex h-full w-[10px] items-center justify-center border-r border-[#ccc]">
            <svg viewBox="0 0 8 8" className="h-[7px] w-[7px]"><path d={d} stroke="#555" fill="#555" strokeWidth=".8" /></svg>
          </button>
        ))}
      </div>
      <button type="button" className="h-full w-[30px] bg-black font-bold text-[#ddd] [clip-path:polygon(0_0,100%_0,80%_100%,20%_100%)]">模型</button>
      <button type="button" className="pr-[5px] pl-[5px]">布局1</button>/
      <button type="button" className="pr-[4px] pl-[5px]">布局2</button>/
      <div className="ml-auto flex h-full w-[302px] items-center border-l-2 border-[#bbb] bg-[#f4f4f4] pl-[6px]">
        <svg viewBox="0 0 4 6" className="h-[5px] w-[4px]"><path d="M3.500 0L1 3l2.500 3" stroke="#333" fill="none" /></svg>
      </div>
    </div>
  );
}

function Mono({ children }: { children: ReactNode }) {
  return <span className="font-['DejaVu_Sans_Mono'] text-[9px] whitespace-pre">{children}</span>;
}

function CommandLine() {
  return (
    <section className="flex h-[56px] shrink-0 border-t-2 border-[#555] text-[11px] text-[#222]">
      <div className="flex w-[15px] flex-col items-center gap-[7px] bg-linear-to-b from-[#909090] to-[#5c5c5c] pt-[10px]">
        <button type="button" aria-label="关闭"><Glyph name="crossW" className="h-[8px] w-[8px]" /></button>
        <button type="button" aria-label="自定义"><Glyph name="wrench" className="h-[10px] w-[10px]" /></button>
      </div>
      <div className="flex min-w-0 flex-1 flex-col bg-[#c9c9c9]">
        <div className="flex-1 pl-[2px]">
          <p className="h-[13px] leading-[13px]">命令<Mono>: *</Mono>取消<Mono>*</Mono></p>
          <p className="h-[13px] leading-[13px]">命令<Mono>: </Mono><span className="font-['DejaVu_Sans_Mono'] text-[10px]">REGION</span></p>
          <p className="h-[13px] leading-[13px]">选择对象<Mono>: </Mono>指定对角点<Mono>: </Mono>找到<Mono> 4 </Mono>个</p>
        </div>
        <label className="flex h-[14px] items-center bg-white pl-[3px] leading-[14px]">
          <Glyph name="region" />
          <svg viewBox="0 0 6 4" className="mr-[5px] ml-[1px] h-[3px] w-[4px]"><path d="M0 0h6L3 4z" fill="#666" /></svg>
          <span className="font-['DejaVu_Sans_Mono'] text-[10px] font-bold text-[#111]">REGION</span>
          <span className="ml-[3px]">选择对象<Mono>:</Mono></span>
          <input aria-label="命令行" className="h-full min-w-0 flex-1 outline-none" />
        </label>
      </div>
    </section>
  );
}

const statusTools = ['snap', 'ortho', 'grid', 'orthoL', 'polar', 'square', 'box', 'angle', 'ucs', 'snap', 'plusK', 'sheetB', 'calc', 'mkblock', 'plusW'];
const statusOn = ['grid', 'square', 'ucs', 'plusK', 'sheetB'];

function StatusBar() {
  return (
    <footer className="relative shrink-0 overflow-hidden bg-[#217346] pl-[2px]">
      <div className="flex h-[12px] items-center bg-linear-to-b from-[#9d9d9d] to-[#808080] text-[8px] leading-[12px] text-[#111]">
        <button type="button" className="flex h-full w-[56px] items-center gap-[4px] border-r border-[#777] bg-[#adadad] pl-[3px] font-['Liberation_Mono','Noto_Sans_CJK_SC',monospace] whitespace-nowrap">
          比例 1:100 <Dot />
        </button>
        <div className="ml-[108px] flex h-full w-[180px] items-center">
          {statusTools.map((n, i) => (
            <button
              key={i}
              type="button"
              aria-label={n}
              className={`flex h-full flex-1 items-center justify-center border-r border-[#888] ${statusOn.includes(n) ? 'bg-[#bfe3f0]' : 'bg-[#b5b5b5]'}`}
            >
              <Glyph name={n} className="h-[9px] w-[9px]" />
            </button>
          ))}
        </div>
        <div className="ml-auto flex h-full w-[328px] items-center">
          <button type="button" className="h-full bg-[#b5b5b5] px-[2px]">模型</button>
          <div className="ml-[2px] flex h-full items-center gap-[2px] bg-[#b5b5b5] px-[1px]">
            <Glyph name="new" className="h-[9px] w-[9px]" />
            <Glyph name="win" className="h-[9px] w-[9px]" />
          </div>
          <div className="ml-[14px] flex h-full flex-1 items-center bg-[#b5b5b5]">
            <Glyph name="person" className="h-[9px] w-[9px]" />1:
          </div>
        </div>
      </div>
      <p className="h-[5px] overflow-hidden text-[8px] leading-[4px] text-[#e8f2ec]">指定目标区域，然后按 ENTER 或双击</p>
      <span className="absolute top-[8px] left-[130px] h-[26px] w-[28px] rounded-full bg-[#3cb45c] text-center text-[8px] leading-[10px] font-bold text-white">68</span>
    </footer>
  );
}

function Watermark() {
  return (
    <div className="absolute right-0 bottom-0 z-30 h-[130px] w-[259px] bg-white">
      <svg viewBox="0 0 100 130" className="absolute top-0 left-0 h-[130px] w-[100px]" aria-label="土木工程网">
        <path d="M28 61C32 48 52 36 72 37C89 38 97 48 88 61C90 49 84 42 72 41C55 40 36 49 28 61Z" fill="#93c322" />
        <path d="M43 51L56 45V80L43 81Z" fill="#1f4fa3" />
        <path d="M49 48L56 45V80L49 80.500Z" fill="#2f62b2" />
        <path d="M57 45L70 50V57L62 61V79L57 80Z" fill="#d2d5d8" />
        <path d="M28 68L39 64V81C33 79 29 75 28 68Z" fill="#1f4fa3" />
        <path d="M63 62L73 58V74L63 78Z" fill="#1f4fa3" />
        <path d="M74 56L84 61L80 70L74 73Z" fill="#d2d5d8" />
        <path d="M26 62C18 78 27 92 48 92C70 91 91 77 92 61C84 74 67 83 51 84C35 84 25 77 26 62Z" fill="#1b4aa0" />
      </svg>
      <div className="pt-[45px] pl-[93px] text-[#111]">
        <p className="text-[28px] leading-[28px] font-black whitespace-nowrap">土木工程网</p>
        <p className="text-[18px] leading-[18px] font-medium italic">www.civilcn.com</p>
      </div>
    </div>
  );
}

export default function App() {
  return (
    <div className="relative flex h-screen flex-col overflow-hidden bg-[#5f5f5f] font-['Noto_Sans','Noto_Sans_CJK_SC',sans-serif]">
      <div className="flex min-h-0 flex-1">
        <div className="w-[2px] bg-[#e9efec] pt-[4px]"><div className="h-[16px] bg-[#217346]" /></div>
        <div className="relative flex min-w-0 flex-1 flex-col">
          <TitleBar />
          <MenuBar />
          <Toolbars />
          <button type="button" aria-label="应用程序" className="absolute top-[4px] left-0 flex h-[22px] w-[23px] items-center border border-[#555] bg-linear-to-b from-[#c4c4c4] to-[#7d7d7d]">
            <svg viewBox="0 0 22 20" className="h-full w-full">
              <path d="M2 16L7 4h4l5 12-4-2-5-1z" fill="#b3201c" />
              <path d="M7 4h4l-1 6-3 3-5 3z" fill="#e2493c" />
              <path d="M11 4l5 12-4-2-2-4z" fill="#7d1512" />
              <path d="M17 11h4l-2 2z" fill="#222" />
            </svg>
          </button>

          <div className="flex min-h-0 flex-1">
            <TreePanel />
            <div className="flex min-w-0 flex-1 flex-col pl-[2px]">
              <div className="flex min-h-0 flex-1">
                <div className="w-[15px] shrink-0 pt-[3px]">
                  <div className="flex h-[239px] w-[13px] flex-col items-center justify-between bg-[#f0f0f0] py-[1px]">
                    <Tools vertical names="line xline pline poly rect arc circle cloud spline ellipse earc insert mkblock point hatch grad region table bigA dots" />
                  </div>
                  <div className="mt-[6px] flex h-[78px] w-[13px] flex-col items-center justify-between bg-[#f0f0f0] py-[1px]">
                    <Tools vertical names="key keyB keyC | cloudq | wheel sunb" />
                  </div>
                </div>
                <div className="flex min-w-0 flex-1 flex-col pt-[1px]">
                  <div className="flex min-h-0 flex-1">
                    <Canvas />
                    <div className="flex w-[12px] flex-col items-center justify-between bg-[#f0f0f0] pt-[4px] pb-[48px]">
                      <svg viewBox="0 0 6 4" className="h-[4px] w-[6px]"><path d="M0 3.500l3-3 3 3" stroke="#333" fill="none" /></svg>
                      <div className="h-[11px] w-[10px] bg-[#c9c9c9]" />
                    </div>
                  </div>
                  <LayoutTabs />
                </div>
                <div className="w-[18px] shrink-0 pt-[4px] pl-[3px]">
                  <div className="flex h-[215px] w-[13px] flex-col items-center justify-between bg-[#f0f0f0] py-[1px]">
                    <Tools vertical names="eraser copy2 mirror offset array arrow4 rotate scale stretch trim extend brk brk2 join chamfer fillet blend explode" />
                  </div>
                  <div className="mt-[6px] flex h-[75px] w-[13px] flex-col items-center justify-between bg-[#f0f0f0] py-[1px]">
                    <Tools vertical names="order order2 order order3 | order4 order2" />
                  </div>
                </div>
              </div>
              <CommandLine />
            </div>
          </div>
        </div>
        <div className="flex w-[5px] flex-col border-l border-[#ccc] bg-[#3a3a3a] pt-[112px]">
          <div className="h-[31px] bg-[#d9692a]" />
          <div className="h-[32px] bg-[#777]" />
        </div>
      </div>
      <StatusBar />
      <Watermark />
    </div>
  );
}
